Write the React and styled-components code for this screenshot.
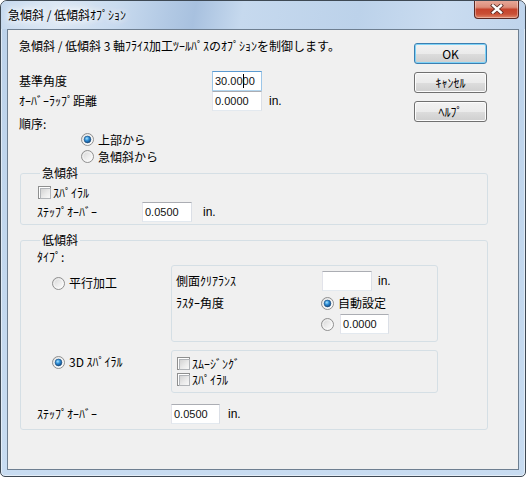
import React, { useId } from 'react';
import styled, { createGlobalStyle } from 'styled-components';

const GlobalStyle = createGlobalStyle`
  html, body { margin: 0; padding: 0; background: #ffffff; }
  body {
    font-family: "Noto Sans CJK JP", "Noto Sans", sans-serif;
    font-size: 12px;
    color: #000;
  }
  * { box-sizing: border-box; }
`;

const Window = styled.div`
  width: 526px;
  height: 477px;
  display: flex;
  flex-direction: column;
  border: 1px solid #3e4954;
  border-radius: 7px 7px 5px 5px;
  background: linear-gradient(180deg, #bcd2ea 0%, #c3d8ee 60%, #c8dcf1 100%);
  box-shadow: inset 0 0 0 1px rgba(255, 255, 255, 0.5);
  overflow: hidden;
`;

const TitleBar = styled.div`
  height: 28px;
  flex-shrink: 0;
  display: flex;
  justify-content: space-between;
  align-items: flex-start;
  padding-left: 7px;
  background: linear-gradient(
    100deg,
    #c4d8ee 0%,
    #dbe7f4 10%,
    #c9dbef 22%,
    #b2c9e4 32%,
    #a8c1df 37%,
    #c6d9ee 46%,
    #bcd2ea 68%,
    #cadcf0 84%,
    #bfd4ec 100%
  );
`;

const Title = styled.span`
  line-height: 28px;
  font-size: 12px;
  text-shadow: 0 0 6px #fff, 0 0 10px #fff, 0 0 14px #fff;
  white-space: nowrap;
`;

const CloseButton = styled.div`
  width: 45px;
  height: 19px;
  margin: -1px 6px 0 0;
  border: 1px solid #5a2823;
  border-top: none;
  border-radius: 0 0 4px 4px;
  background: linear-gradient(
    180deg,
    #e9ab9c 0%,
    #dc8d7a 40%,
    #c6432c 52%,
    #c94f36 78%,
    #e0876a 100%
  );
  box-shadow: inset 0 0 0 1px rgba(255, 255, 255, 0.35);
  display: flex;
  align-items: center;
  justify-content: center;
`;

const Client = styled.div`
  flex: 1;
  margin: 0 6px 6px 6px;
  border: 1px solid #6e7f91;
  background: #f0f0f0;
  padding: 8px 0 0 11px;
`;

const TopSection = styled.div`
  display: flex;
`;

const TopLeft = styled.div`
  width: 395px;
  flex-shrink: 0;
`;

const Description = styled.div`
  height: 16px;
  line-height: 16px;
  white-space: nowrap;
`;

const ButtonColumn = styled.div`
  margin-top: 5px;
  display: flex;
  flex-direction: column;
  gap: 8px;
`;

const Button = styled.button`
  width: 73px;
  height: 21px;
  padding: 0;
  border: 1px solid ${(p) => (p.$default ? '#3c7fb1' : '#707070')};
  border-radius: 3px;
  background: linear-gradient(180deg, #f2f2f2 0%, #ebebeb 50%, #dddddd 51%, #cfcfcf 100%);
  box-shadow: inset 0 0 0 1px ${(p) => (p.$default ? '#7fd3f7' : '#fcfcfc')};
  font-family: "Noto Sans CJK JP", "Noto Sans", sans-serif;
  font-size: 12px;
  line-height: 19px;
  color: #000;
`;

const FormRow = styled.div`
  display: flex;
  align-items: center;
  height: 20px;
  margin-top: ${(p) => p.$mt || 0}px;
`;

const FieldLabel = styled.span`
  width: ${(p) => p.$w}px;
  flex-shrink: 0;
  line-height: 16px;
  white-space: nowrap;
`;

const TextBox = styled.div`
  width: ${(p) => p.$w || 50}px;
  height: 20px;
  flex-shrink: 0;
  margin-left: ${(p) => p.$ml || 0}px;
  display: flex;
  align-items: center;
  padding-left: 2px;
  background: #fff;
  border: 1px solid;
  border-color: ${(p) =>
    p.$focused ? '#5c9bd1 #9cc6e8 #b4d6ee #9cc6e8' : '#abadb3 #dbdfe6 #e3e9ef #e2e3ea'};
  font-family: "Liberation Sans", Arial, sans-serif;
  font-size: 11px;
  color: #111;
  white-space: nowrap;
`;

const Caret = styled.span`
  display: inline-block;
  width: 1px;
  height: 14px;
  margin: 0 -1px 0 0;
  background: #000;
`;

const Unit = styled.span`
  margin-left: ${(p) => p.$gap}px;
  font-family: "Liberation Sans", Arial, sans-serif;
  font-size: 12px;
`;

const SectionLabel = styled.div`
  margin-top: ${(p) => p.$mt || 0}px;
  height: ${(p) => p.$h || 16}px;
  line-height: ${(p) => p.$h || 16}px;
`;

const RadioRow = styled.div`
  height: 17px;
  display: flex;
  align-items: center;
  padding-left: ${(p) => p.$indent || 0}px;
`;

const RadioItem = styled.label`
  display: inline-flex;
  align-items: center;
  gap: 4px;
  line-height: 16px;
  white-space: nowrap;
`;

const RadioSvg = styled.svg`
  display: block;
  flex-shrink: 0;
`;

const CheckRow = styled.div`
  height: 16px;
  display: flex;
  align-items: center;
  gap: 2px;
  margin-left: ${(p) => p.$ml || 0}px;
  white-space: nowrap;
`;

const CheckBox = styled.span`
  width: 13px;
  height: 13px;
  flex-shrink: 0;
  border: 1px solid #8e8f8f;
  background: #fff;
  padding: 1px;
  &::after {
    content: '';
    display: block;
    width: 100%;
    height: 100%;
    border: 1px solid #b1b4b8;
    background: linear-gradient(135deg, #d3d3d3 0%, #ececec 60%, #f8f8f8 100%);
  }
`;

const Group = styled.fieldset`
  margin: ${(p) => p.$mt || 0}px 0 0 1px;
  width: 468px;
  min-inline-size: 0;
  padding: ${(p) => p.$pad};
  border: 1px solid #d5dfe5;
  border-radius: 3px;
`;

const Legend = styled.legend`
  margin-left: 3px;
  padding: 0 2px;
  line-height: 16px;
`;

const OptionRow = styled.div`
  display: flex;
  margin-top: ${(p) => p.$mt || 0}px;
`;

const OptionCell = styled.div`
  width: 119px;
  margin-left: 15px;
  padding-top: ${(p) => p.$pt}px;
  flex-shrink: 0;
`;

const SubBox = styled.div`
  width: 267px;
  padding: ${(p) => p.$pad};
  border: 1px solid #d5dfe5;
  border-radius: 3px;
`;

function Radio({ checked }) {
  const id = useId().replace(/:/g, '');
  return (
    <RadioSvg width="13" height="13" viewBox="0 0 13 13">
      <defs>
        <linearGradient id={`rf${id}`} x1="0" y1="0" x2="1" y2="1">
          <stop offset="0" stopColor="#d2d2d2" />
          <stop offset="0.6" stopColor="#f0f0f0" />
          <stop offset="1" stopColor="#fdfdfd" />
        </linearGradient>
        <radialGradient id={`rd${id}`} cx="0.4" cy="0.35" r="0.7">
          <stop offset="0" stopColor="#a9e4ff" />
          <stop offset="0.45" stopColor="#2f8fd8" />
          <stop offset="1" stopColor="#0f3f77" />
        </radialGradient>
      </defs>
      <circle cx="6.5" cy="6.5" r="6" fill={`url(#rf${id})`} stroke="#8f8f8f" strokeWidth="1" />
      <circle cx="6.5" cy="6.5" r="4.6" fill="none" stroke="#ffffff" strokeWidth="0.8" opacity="0.7" />
      {checked && (
        <circle cx="6.5" cy="6.5" r="3.4" fill={`url(#rd${id})`} stroke="#1c4f7e" strokeWidth="0.6" />
      )}
    </RadioSvg>
  );
}

function CloseGlyph() {
  return (
    <svg width="14" height="10" viewBox="0 0 14 10">
      <path d="M3 1.5 L11 8.5 M11 1.5 L3 8.5" stroke="#5b2a24" strokeWidth="4" strokeLinecap="square" />
      <path d="M3 1.5 L11 8.5 M11 1.5 L3 8.5" stroke="#ffffff" strokeWidth="2.4" strokeLinecap="square" />
    </svg>
  );
}

export default function App() {
  return (
    <>
      <GlobalStyle />
      <Window>
        <TitleBar>
          <Title>急傾斜 / 低傾斜ｵﾌﾟｼｮﾝ</Title>
          <CloseButton>
            <CloseGlyph />
          </CloseButton>
        </TitleBar>
        <Client>
          <TopSection>
            <TopLeft>
              <Description>急傾斜 / 低傾斜 3 軸ﾌﾗｲｽ加工ﾂｰﾙﾊﾟｽのｵﾌﾟｼｮﾝを制御します。</Description>
              <FormRow $mt={17}>
                <FieldLabel $w={193}>基準角度</FieldLabel>
                <TextBox $focused>
                  30.00
                  <Caret />
                  00
                </TextBox>
              </FormRow>
              <FormRow>
                <FieldLabel $w={193}>ｵｰﾊﾞｰﾗｯﾌﾟ距離</FieldLabel>
                <TextBox>0.0000</TextBox>
                <Unit $gap={7}>in.</Unit>
              </FormRow>
              <SectionLabel $mt={6} $h={14}>順序:</SectionLabel>
              <RadioRow $indent={62}>
                <RadioItem>
                  <Radio checked />
                  上部から
                </RadioItem>
              </RadioRow>
              <RadioRow $indent={62}>
                <RadioItem>
                  <Radio />
                  急傾斜から
                </RadioItem>
              </RadioRow>
            </TopLeft>
            <ButtonColumn>
              <Button $default>OK</Button>
              <Button>ｷｬﾝｾﾙ</Button>
              <Button>ﾍﾙﾌﾟ</Button>
            </ButtonColumn>
          </TopSection>

          <Group $pad="3px 0 2px 16px">
            <Legend>急傾斜</Legend>
            <CheckRow $ml={1}>
              <CheckBox />
              ｽﾊﾟｲﾗﾙ
            </CheckRow>
            <FormRow $mt={2}>
              <FieldLabel $w={105}>ｽﾃｯﾌﾟｵｰﾊﾞｰ</FieldLabel>
              <TextBox>0.0500</TextBox>
              <Unit $gap={11}>in.</Unit>
            </FormRow>
          </Group>

          <Group $mt={7} $pad="1px 0 5px 16px">
            <Legend>低傾斜</Legend>
            <SectionLabel>ﾀｲﾌﾟ:</SectionLabel>
            <OptionRow>
              <OptionCell $pt={10}>
                <RadioItem>
                  <Radio />
                  平行加工
                </RadioItem>
              </OptionCell>
              <SubBox $pad="5px 4px 7px 4px">
                <FormRow>
                  <FieldLabel $w={146}>側面ｸﾘｱﾗﾝｽ</FieldLabel>
                  <TextBox />
                  <Unit $gap={6}>in.</Unit>
                </FormRow>
                <FormRow $mt={2}>
                  <FieldLabel $w={145}>ﾗｽﾀｰ角度</FieldLabel>
                  <RadioItem>
                    <Radio checked />
                    自動設定
                  </RadioItem>
                </FormRow>
                <FormRow $mt={1}>
                  <FieldLabel $w={145} />
                  <Radio />
                  <TextBox $w={49} $ml={6}>0.0000</TextBox>
                </FormRow>
              </SubBox>
            </OptionRow>
            <OptionRow $mt={8}>
              <OptionCell $pt={4}>
                <RadioItem>
                  <Radio checked />
                  3D ｽﾊﾟｲﾗﾙ
                </RadioItem>
              </OptionCell>
              <SubBox $pad="4px 5px 5px 5px">
                <CheckRow>
                  <CheckBox />
                  ｽﾑｰｼﾞﾝｸﾞ
                </CheckRow>
                <CheckRow>
                  <CheckBox />
                  ｽﾊﾟｲﾗﾙ
                </CheckRow>
              </SubBox>
            </OptionRow>
            <FormRow $mt={11}>
              <FieldLabel $w={134}>ｽﾃｯﾌﾟｵｰﾊﾞｰ</FieldLabel>
              <TextBox $w={49}>0.0500</TextBox>
              <Unit $gap={8}>in.</Unit>
            </FormRow>
          </Group>
        </Client>
      </Window>
    </>
  );
}
